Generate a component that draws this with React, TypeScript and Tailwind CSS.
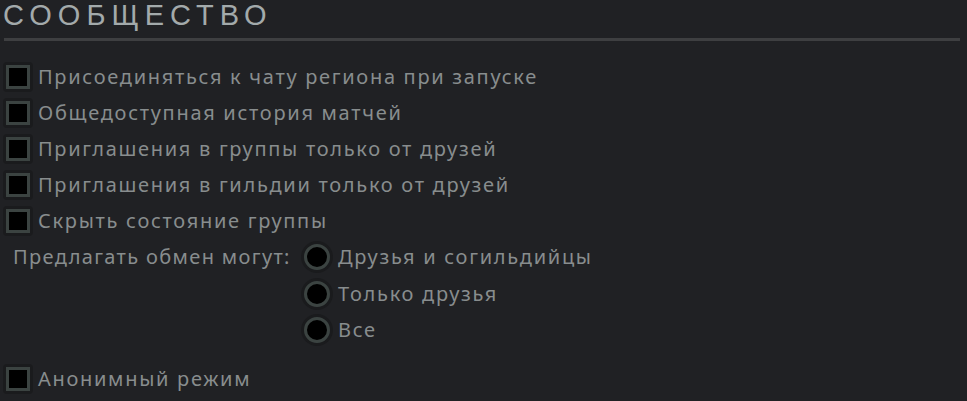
import React from 'react';

const checks = [
  'Присоединяться к чату региона при запуске',
  'Общедоступная история матчей',
  'Приглашения в группы только от друзей',
  'Приглашения в гильдии только от друзей',
  'Скрыть состояние группы',
];

const tradeOptions = ['Друзья и согильдийцы', 'Только друзья', 'Все'];

const CheckBox: React.FC<{ label: string }> = ({ label }) => (
  <div className="flex items-center h-[36px]">
    <span className="ml-[3px] flex items-center justify-center w-[30px] h-[30px] rounded-[4px] bg-[#1a1b1d]">
      <span className="block w-[24px] h-[24px] border-[3px] border-[#3b4341] bg-black" />
    </span>
    <span className="ml-[5px] text-[20px] tracking-[1.7px] text-[#888d8e]">{label}</span>
  </div>
);

const Radio: React.FC<{ label: string }> = ({ label }) => (
  <div className="flex items-center h-[36.5px]">
    <span className="flex items-center justify-center w-[32px] h-[32px] rounded-full bg-[#1a1b1d]">
      <span className="block w-[26px] h-[26px] rounded-full border-[3px] border-[#3b4341] bg-black" />
    </span>
    <span className="ml-[5px] text-[20px] tracking-[1.7px] text-[#888d8e]">{label}</span>
  </div>
);

export default function App() {
  return (
    <div
      className="w-[967px] h-[401px] overflow-hidden bg-[#202124]"
      style={{ fontFamily: '"Noto Sans", "Open Sans", sans-serif' }}
    >
      <div className="pl-[3px] h-[38px]">
        <h1
          className="text-[29px] leading-[31px] tracking-[6px] text-[#a3aaab]"
          style={{ fontFamily: '"Liberation Sans", Arial, sans-serif' }}
        >
          СООБЩЕСТВО
        </h1>
      </div>
      <div className="ml-[4px] w-[956px] h-[3px] bg-[#3e3f41]" />
      <div className="mt-[18px] flex flex-col">
        {checks.map((c) => (
          <CheckBox key={c} label={c} />
        ))}
      </div>
      <div className="flex">
        <div className="pl-[13px] h-[36.5px] flex items-center text-[20px] tracking-[1.35px] text-[#888d8e] w-[301px]">
          Предлагать обмен могут:
        </div>
        <div className="flex flex-col">
          {tradeOptions.map((o) => (
            <Radio key={o} label={o} />
          ))}
        </div>
      </div>
      <div className="mt-[12px]">
        <CheckBox label="Анонимный режим" />
      </div>
    </div>
  );
}
